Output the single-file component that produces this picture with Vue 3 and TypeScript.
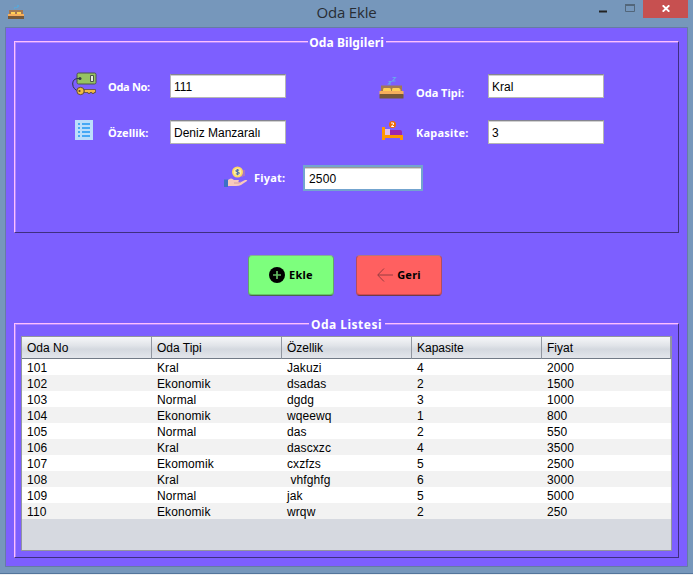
<script setup lang="ts">
import { ref } from 'vue'

interface Room {
  no: string
  type: string
  feature: string
  capacity: string
  price: string
}

const roomNo = ref('111')
const roomType = ref('Kral')
const feature = ref('Deniz Manzaralı')
const capacity = ref('3')
const price = ref('2500')

const columns: string[] = ['Oda No', 'Oda Tipi', 'Özellik', 'Kapasite', 'Fiyat']

const rooms = ref<Room[]>([
  { no: '101', type: 'Kral', feature: 'Jakuzi', capacity: '4', price: '2000' },
  { no: '102', type: 'Ekonomik', feature: 'dsadas', capacity: '2', price: '1500' },
  { no: '103', type: 'Normal', feature: 'dgdg', capacity: '3', price: '1000' },
  { no: '104', type: 'Ekonomik', feature: 'wqeewq', capacity: '1', price: '800' },
  { no: '105', type: 'Normal', feature: 'das', capacity: '2', price: '550' },
  { no: '106', type: 'Kral', feature: 'dascxzc', capacity: '4', price: '3500' },
  { no: '107', type: 'Ekomomik', feature: 'cxzfzs', capacity: '5', price: '2500' },
  { no: '108', type: 'Kral', feature: '\u00a0vhfghfg', capacity: '6', price: '3000' },
  { no: '109', type: 'Normal', feature: 'jak', capacity: '5', price: '5000' },
  { no: '110', type: 'Ekonomik', feature: 'wrqw', capacity: '2', price: '250' },
])

function addRoom(): void {
  rooms.value.push({
    no: roomNo.value,
    type: roomType.value,
    feature: feature.value,
    capacity: capacity.value,
    price: price.value,
  })
}
</script>

<template>
  <div class="window">
    <header class="titlebar">
      <svg class="app-icon" width="16" height="14" viewBox="0 0 16 14">
        <path d="M9 0h2v2h-1v1H8V2h1zM6 2h2v1H7v1H6z" fill="#5ba6d6" />
        <path d="M1 5h14v5H1z" fill="#a27854" />
        <path d="M3 7h4v2H3zM9 7h4v2H9z" fill="#ffd056" />
        <path d="M0 9h16v2H0z" fill="#f6ae5c" />
        <path d="M0 11h16v3H0z" fill="#765838" />
      </svg>
      <h1 class="title">Oda Ekle</h1>
      <div class="controls">
        <svg class="min" width="8" height="3"><path d="M0 .5h8v2H0z" fill="#222" /></svg>
        <svg class="max" width="10" height="8"><path d="M.5 1h9v6.5h-9z" fill="none" stroke="#52667a" /><path d="M0 0h10v2H0z" fill="#52667a" /></svg>
        <button class="close" aria-label="Kapat">
          <svg width="8" height="7"><path d="M.7.3l6.6 6.4M7.3.3L.7 6.7" stroke="#fff" stroke-width="1.9" /></svg>
        </button>
      </div>
    </header>

    <main class="content">
      <section class="group info">
        <h2 class="legend">Oda Bilgileri</h2>
        <div class="form">
          <label class="field">
            <svg class="icon key" width="25" height="24" viewBox="0 0 25 24">
              <rect x="5" y="1" width="19" height="11" rx="1.5" fill="#96c362" stroke="#4c554b" />
              <path d="M18.5 3.5h3v6h-3z" fill="#e9eee6" stroke="#4c554b" />
              <circle cx="8" cy="6.5" r="1.5" fill="#364044" />
              <path d="M8 6.5C2 6 .7 9 .7 12c0 4 3 6 5 7" fill="none" stroke="#303842" />
              <path d="M12 17.5h11.5v3H22v1h-2v-1h-2v1h-2v-1h-4z" fill="#f3b944" stroke="#5c4942" stroke-width=".8" />
              <circle cx="8.5" cy="19" r="3.7" fill="#f3bd40" stroke="#5c4942" />
              <circle cx="7.5" cy="19" r="1.1" fill="#58423b" />
            </svg>
            <span class="label tight">Oda No:</span>
            <input v-model="roomNo" class="input" />
          </label>
          <label class="field right">
            <svg class="icon bed" width="25" height="22" viewBox="0 0 25 22">
              <path d="M9.500 4.500h2.500l-2.500 2.500h2.500M13.500.5h3l-3 3.500h3" fill="none" stroke="#69a4ed" stroke-width="1.1" />
              <path d="M2 8.500h21v8H2z" fill="#a27854" />
              <path d="M5 11h5.500q1.500 0 1.500 2v2H4v-2q0-2 1-2M14 11h6q1.500 1 1.500 2v2H13v-2q0-2 1-2" fill="#ffd056" />
              <path d="M.5 14h24v4H.5z" fill="#f6ae5c" />
              <path d="M.5 17h24v4.500H.5z" fill="#765838" />
            </svg>
            <span class="label low">Oda Tipi:</span>
            <input v-model="roomType" class="input" />
          </label>
          <label class="field">
            <svg class="icon list" width="18" height="20" viewBox="0 0 18 20">
              <path d="M0 0h18v20H0z" fill="#bddefb" />
              <path d="M3 4h2M7 4h8M3 8h2M7 8h8M3 12h2M7 12h8M3 16h2M7 16h8" stroke="#2196f3" stroke-width="1.500" />
            </svg>
            <span class="label">Özellik:</span>
            <input v-model="feature" class="input" />
          </label>
          <label class="field right">
            <svg class="icon single" width="21" height="19" viewBox="0 0 21 19">
              <path d="M0 6h3v8h18v5h-3v-2H3v2H0z" fill="#ff9800" />
              <path d="M3 8h5v6H3z" fill="#e1bee7" />
              <path d="M8 9h10q2 0 2 2v3H8z" fill="#9c27b0" />
              <circle cx="10.500" cy="3.500" r="3.500" fill="#ef6c00" />
              <path d="M9 2h2.500v1.500L9.500 5v.5H12" fill="none" stroke="#fff" stroke-width="1" />
            </svg>
            <span class="label wide">Kapasite:</span>
            <input v-model="capacity" class="input" />
          </label>
          <label class="field price">
            <svg class="icon money" width="24" height="22" viewBox="0 0 24 22">
              <path d="M18 4v7M20 4v6" stroke="#d48b8b" />
              <circle cx="13.500" cy="6" r="5.500" fill="#ffd764" />
              <circle cx="13.500" cy="6" r="3.800" fill="#fff0a1" />
              <path d="M15.200 4.300q-3.200-1-3.300.5-.1.800 1.700 1.200 1.900.5 1.500 1.500-.5 1-3.300.2M13.500 2.900v6.300" fill="none" stroke="#5572a6" stroke-width="1.100" />
              <path d="M4 14q3-3 6 0h4q2 .5 0 2l2 .500 5-2.500q3-.5 2 1l-6 4q-2 1-5 1H4z" fill="#f8c9bd" />
              <path d="M10 17h5l2-1" fill="none" stroke="#d69fa1" />
              <path d="M0 13.500h4v7.500H0z" fill="#3c70c6" />
            </svg>
            <span class="label wide">Fiyat:</span>
            <input v-model="price" class="input focused" />
          </label>
        </div>
      </section>

      <div class="actions">
        <button class="button add" @click="addRoom">
          <svg width="16" height="16" viewBox="0 0 16 16"><circle cx="8" cy="8" r="8" fill="#000" /><path d="M8 4v8M4 8h8" stroke="#62bb61" stroke-width="1.700" /></svg>
          <span>Ekle</span>
        </button>
        <button class="button back">
          <svg width="16" height="16" viewBox="0 0 16 16"><path d="M16 8H1M7 1.500L.7 8 7 14.500" fill="none" stroke="#963d41" /></svg>
          <span>Geri</span>
        </button>
      </div>

      <section class="group listing">
        <h2 class="legend list-legend">Oda Listesi</h2>
        <div class="table-frame">
          <table>
            <thead><tr><th v-for="column in columns" :key="column">{{ column }}</th></tr></thead>
            <tbody>
              <tr v-for="room in rooms" :key="room.no">
                <td>{{ room.no }}</td><td>{{ room.type }}</td><td>{{ room.feature }}</td><td>{{ room.capacity }}</td><td>{{ room.price }}</td>
              </tr>
            </tbody>
          </table>
        </div>
      </section>
    </main>
  </div>
</template>

<style>
body { margin: 0; background: #f0f1f3; overflow: hidden; }
</style>

<style scoped>
* { box-sizing: border-box; }
.window { width: 693px; height: 574px; padding: 0 5px; background: #7697bb; border-bottom: 1px solid #53759b; }
.titlebar { display: grid; grid-template-columns: 103px 1fr 103px; height: 27px; }
.app-icon { margin: 5px 0 0 3px; }
.title { margin: 0; text-align: center; font: 400 15px/25px "Open Sans", sans-serif; color: #282d34; letter-spacing: -.2px; }
.controls { display: flex; align-items: flex-start; justify-content: flex-end; }
.min { margin: 10px 18px 0 0; }
.max { margin: 4px 8px 0 0; }
.close { display: flex; align-items: center; justify-content: center; flex: 0 0 45px; height: 18px; padding: 0 0 1px; border: 0; background: #c75050; }
.content { height: 540px; padding: 13px 8px 0; background: #7d5fff; border: 1px solid #667ba5; }
.group { width: 665px; border: 1px solid; border-color: #ffbfff #3f2f80 #3f2f80 #ffbfff; box-shadow: inset 1px 1px #af85ff; }
.info { height: 192px; }
.legend { width: 78px; height: 16px; margin: -7px auto 0; text-align: center; background: #7d5fff; color: #fff; font: 700 12px/16px "Noto Sans", sans-serif; letter-spacing: .1px; white-space: nowrap; }
.list-legend { width: 76px; letter-spacing: .5px; }
.form { display: grid; grid-template-columns: 307px 1fr; row-gap: 22px; padding: 23px 0 0 57px; }
.field { display: grid; grid-template-columns: 36px 62px 116px; height: 24px; }
.field.right { grid-template-columns: 37px 72px 116px; }
.icon { display: block; }
.key { margin-top: -2px; }
.bed { margin-top: 3px; }
.list { margin: 0 0 0 3px; }
.single { margin: 1px 0 0 3px; }
.label { padding-top: 5px; color: #fff; font: 700 11px/16px "Noto Sans", sans-serif; white-space: nowrap; }
.label.tight { letter-spacing: -.3px; }
.label.wide { letter-spacing: .2px; }
.label.low { padding-top: 11px; }
.input { width: 116px; height: 24px; margin: 0; padding: 1px 4px 0 3px; border: 1px solid #b5b5b5; border-top-color: #858590; border-radius: 0; outline: 0; background: #fff; box-shadow: inset 0 1px #d0d0d0; color: #000; font: 12px "Liberation Sans", sans-serif; }
.price { grid-column: 1 / 3; grid-template-columns: 30px 49px 120px; margin: -1px 0 0 152px; height: 26px; }
.money { margin-top: 1px; }
.input.focused { width: 120px; height: 26px; padding-left: 4px; letter-spacing: .2px; border: 2px solid #73a4cf; box-shadow: inset 0 1px #999, inset 0 2px #d4d4d4; }
.actions { display: flex; gap: 22px; padding: 22px 0 0 234px; height: 90px; }
.button { display: flex; align-items: center; justify-content: center; gap: 4px; width: 86px; height: 41px; padding: 0 0 1px; border: 1px solid; border-radius: 4px; color: #000; font: 700 11px/16px "Noto Sans", sans-serif; letter-spacing: .25px; }
.add { background: #7dff7d; border-color: #83af95 #63a26c #4a674d; box-shadow: inset 0 -1px #67c568; }
.back { background: #ff6060; border-color: #b3767e #b24c60 #6e3c4a; box-shadow: inset 0 -1px #d14b53; }
.listing { height: 235px; }
.table-frame { width: 651px; height: 215px; margin: 3px 0 0 6px; border: 1px solid #92959e; background: #d6d9e0; }
table { width: 649px; table-layout: fixed; border-collapse: separate; border-spacing: 0; color: #000; font: 12px/16px "Liberation Sans", sans-serif; }
th { height: 22px; padding: 1px 0 0 5px; text-align: left; font-weight: 400; background: linear-gradient(#f6f7f9 0%, #e0e3e8 42%, #d4d8df 58%, #e3e6eb 100%); border-right: 1px solid #9297a1; border-bottom: 1px solid #727a86; }
th:not(:last-child) { width: 130px; }
td { height: 16px; padding: 2px 0 0 5px; line-height: 14px; background: #fff; letter-spacing: .1px; }
tbody tr:nth-child(even) td { background: #f2f2f2; }
</style>
